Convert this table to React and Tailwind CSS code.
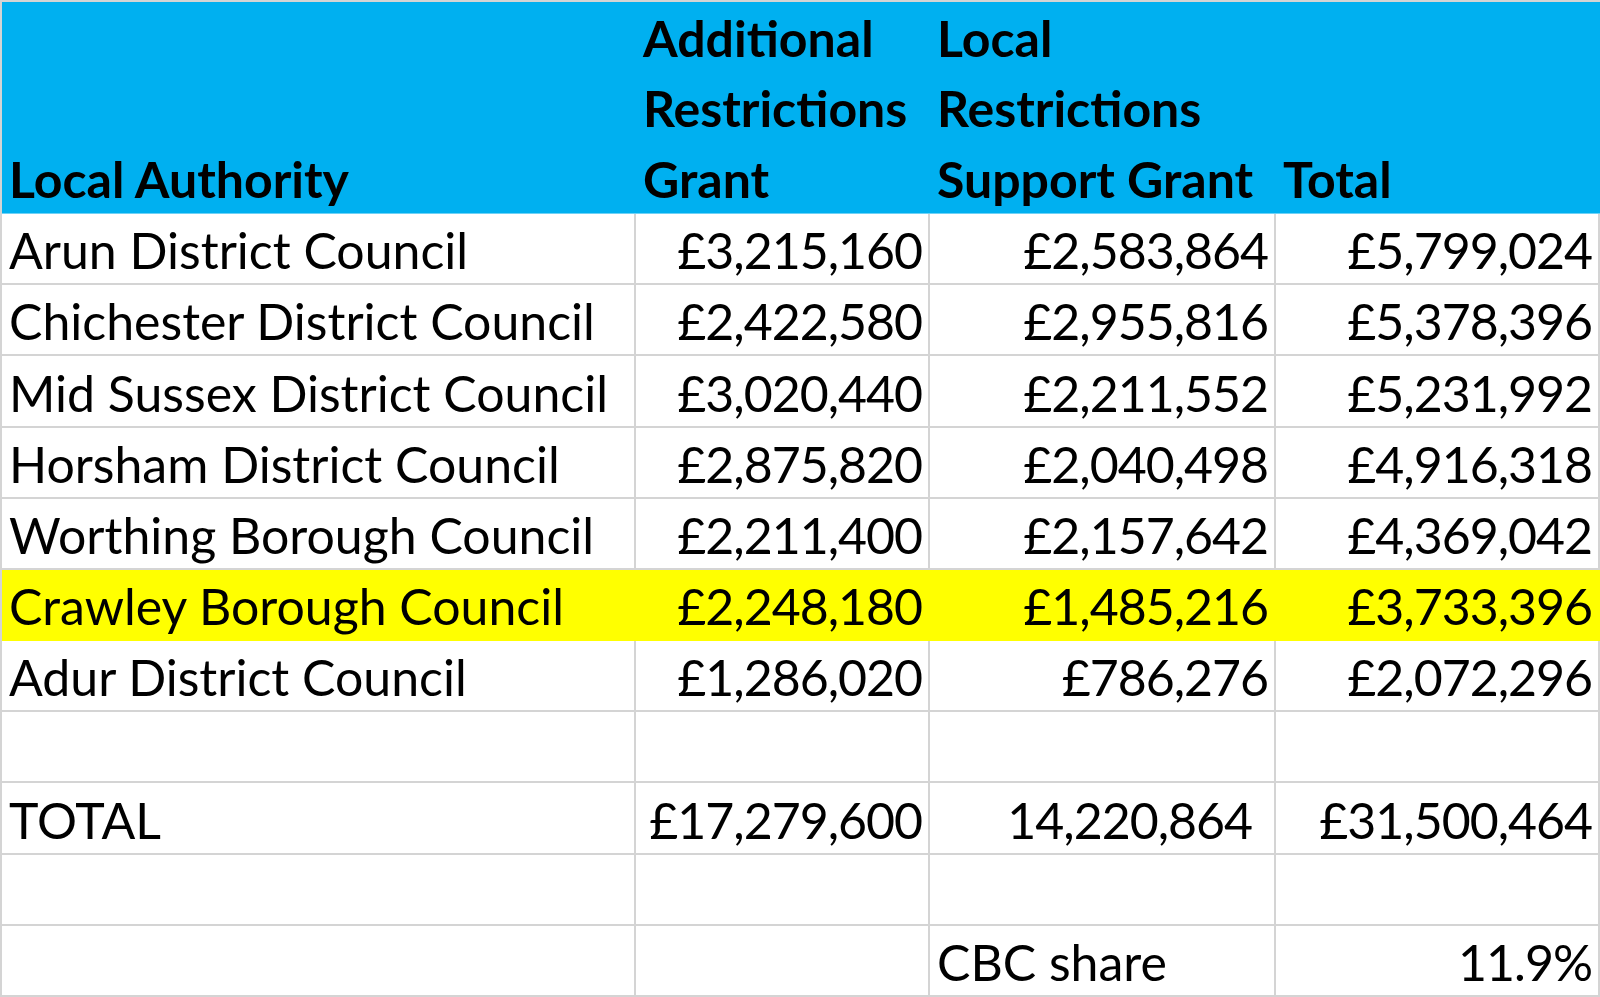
import React from 'react'

// grant allocation sheet, laid out like the Excel grid
const rows = [
  ['Arun District Council', '£3,215,160', '£2,583,864', '£5,799,024'],
  ['Chichester District Council', '£2,422,580', '£2,955,816', '£5,378,396'],
  ['Mid Sussex District Council', '£3,020,440', '£2,211,552', '£5,231,992'],
  ['Horsham District Council', '£2,875,820', '£2,040,498', '£4,916,318'],
  ['Worthing Borough Council', '£2,211,400', '£2,157,642', '£4,369,042'],
  ['Crawley Borough Council', '£2,248,180', '£1,485,216', '£3,733,396', 'hl'],
  ['Adur District Council', '£1,286,020', '£786,276', '£2,072,296'],
  ['', '', '', ''],
  ['TOTAL', '£17,279,600', '14,220,864', '£31,500,464', 'total'],
  ['', '', '', ''],
  ['', '', 'CBC share', '11.9%', 'share'],
]

const cols = 'grid grid-cols-[634px_294px_346px_324px]'

const Cell = ({ children, right, hl, extraPad }) => (
  <div
    className={
      'flex items-end whitespace-nowrap pb-[8px] border-r-2 border-b-2 ' +
      (hl ? 'bg-[#ffff00] border-[#ffff00] ' : 'border-[#d4d4d4] ') +
      (right ? 'justify-end tracking-[-1px] ' : 'justify-start pl-[7px] ') +
      (right ? (extraPad ? 'pr-[22px]' : 'pr-[6px]') : '')
    }
  >
    <span className="leading-[50px]">{children}</span>
  </div>
)

const HeadCell = ({ lines }) => (
  <div className="flex flex-col justify-end pl-[7px] -mb-[1px] whitespace-nowrap">
    {lines.map((l, i) => (
      <div key={i} className="leading-[70.5px]">{l}</div>
    ))}
  </div>
)

export default function App() {
  return (
    <div className="w-[1600px] h-[997px] bg-white border-l-2 border-t-2 border-[#d4d4d4] text-black font-['Lato','Liberation_Sans',sans-serif] text-[50px] overflow-hidden">
      {/* blue header */}
      <div className={cols + ' h-[212px] bg-[#00b0f0] border-b border-[#6fd2f6] font-bold'}>
        <HeadCell lines={['Local Authority']} />
        <HeadCell lines={['Additional', 'Restrictions', 'Grant']} />
        <HeadCell lines={['Local', 'Restrictions', 'Support Grant']} />
        <HeadCell lines={['Total']} />
      </div>

      <div className={cols + ' h-[783px] grid-rows-[repeat(11,minmax(0,1fr))]'}>
        {rows.map((r, i) => {
          const hl = r[4] === 'hl'
          return (
            <React.Fragment key={i}>
              <Cell hl={hl}>{r[0]}</Cell>
              <Cell hl={hl} right>{r[1]}</Cell>
              {r[4] === 'share' ? (
                <Cell>{r[2]}</Cell>
              ) : (
                <Cell hl={hl} right extraPad={r[4] === 'total'}>{r[2]}</Cell>
              )}
              <Cell hl={hl} right>{r[3]}</Cell>
            </React.Fragment>
          )
        })}
      </div>
    </div>
  )
}
